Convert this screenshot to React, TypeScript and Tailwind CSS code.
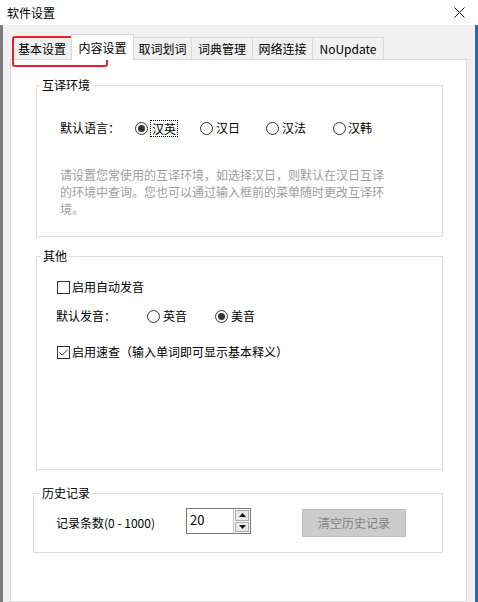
import type { ReactNode } from 'react';

const Radio = ({ checked }: { checked?: boolean }) => (
  <span className="flex h-[13px] w-[13px] shrink-0 items-center justify-center rounded-full border border-[#333333] bg-white">
    {checked && <span className="h-[7px] w-[7px] rounded-full bg-[#333333]" />}
  </span>
);

const Checkbox = ({ checked }: { checked?: boolean }) => (
  <span className="flex h-[13px] w-[13px] shrink-0 items-center justify-center border border-[#333333] bg-white">
    {checked && (
      <svg width="11" height="11" viewBox="0 0 11 11">
        <path d="M1.5 5.5 L4.2 8.2 L9.6 2.6" stroke="#333333" strokeWidth="1" fill="none" />
      </svg>
    )}
  </span>
);

const Group = ({
  title,
  className,
  legendClass,
  children,
}: {
  title: string;
  className: string;
  legendClass: string;
  children: ReactNode;
}) => (
  <fieldset className={`border border-[#dcdcdc] ${className}`}>
    <legend className={`px-[2px] text-[12px] leading-[16px] text-black ${legendClass}`}>{title}</legend>
    {children}
  </fieldset>
);

const tabs = [
  { label: '基本设置', w: 'w-[60px]' },
  { label: '内容设置', w: 'w-[63px]', active: true },
  { label: '取词划词', w: 'w-[59px]' },
  { label: '词典管理', w: 'w-[62px]' },
  { label: '网络连接', w: 'w-[61px]' },
  { label: 'NoUpdate', w: 'w-[72px]' },
];

export default function App() {
  return (
    <div className="relative h-[602px] w-[478px] overflow-hidden bg-[#f0f0f0] font-['Noto_Sans_CJK_SC','Noto_Sans',sans-serif] text-[12px] text-black">
      {/* Title bar */}
      <div className="flex h-[25px] items-center justify-between bg-white pl-[7px] pr-[13px]">
        <span className="leading-[16px]">软件设置</span>
        <svg width="11" height="11" viewBox="0 0 11 11">
          <path d="M0.5 0.5 L10.5 10.5 M10.5 0.5 L0.5 10.5" stroke="#111111" strokeWidth="1" />
        </svg>
      </div>

      <div className="flex h-[577px]">
        <div className="w-[3px] bg-[#7d7d7d]" />

        <div className="flex-1 pl-[7px] pt-[9px]">
          {/* Tabs */}
          <div className="flex h-[25px] items-end pl-[2px]">
            {tabs.map((t, i) =>
              t.active ? (
                <div
                  key={t.label}
                  className={`relative z-10 -mb-px flex h-[26px] items-center justify-center border border-b-0 border-[#d9d9d9] bg-white leading-[16px] ${t.w} ${i > 0 ? '-ml-px' : ''}`}
                >
                  {t.label}
                </div>
              ) : (
                <div
                  key={t.label}
                  className={`flex h-[22px] items-center justify-center border border-b-0 border-[#d9d9d9] bg-[#f0f0f0] pt-[1px] leading-[16px] ${t.w} ${i > 0 ? '-ml-px' : ''}`}
                >
                  {t.label}
                </div>
              )
            )}
          </div>

          {/* Tab panel */}
          <div className="h-[543px] w-[457px] border border-[#d9d9d9] bg-white pt-[17px]">
            <Group title="互译环境" className="ml-[25px] w-[407px] pb-[19px]" legendClass="ml-[3px]">
              <div className="mt-[26px] flex h-[18px] items-center pl-[23px]">
                <span className="w-[75px] leading-[16px]">默认语言：</span>
                <div className="flex w-[65px] items-center">
                  <Radio checked />
                  <span className="ml-[2px] border border-dotted border-black pl-[1px] pr-[1px] leading-[15px]">汉英</span>
                </div>
                <div className="flex w-[66px] items-center">
                  <Radio />
                  <span className="ml-[3px] leading-[16px]">汉日</span>
                </div>
                <div className="flex w-[67px] items-center">
                  <Radio />
                  <span className="ml-[3px] leading-[16px]">汉法</span>
                </div>
                <div className="flex items-center">
                  <Radio />
                  <span className="ml-[2px] leading-[16px]">汉韩</span>
                </div>
              </div>
              <p className="mt-[29px] pl-[23px] leading-[17px] text-[#9d9d9d]">
                请设置您常使用的互译环境，如选择汉日，则默认在汉日互译
                <br />
                的环境中查询。您也可以通过输入框前的菜单随时更改互译环
                <br />
                境。
              </p>
            </Group>

            <Group title="其他" className="ml-[25px] mt-[11px] w-[407px] pb-[108px]" legendClass="ml-[4px]">
              <div className="mt-[14px] flex h-[18px] items-center pl-[20px]">
                <Checkbox />
                <span className="ml-[2px] leading-[16px]">启用自动发音</span>
              </div>
              <div className="mt-[11px] flex h-[18px] items-center pl-[19px]">
                <span className="w-[91px] leading-[16px]">默认发音：</span>
                <div className="flex w-[68px] items-center">
                  <Radio />
                  <span className="ml-[3px] leading-[16px]">英音</span>
                </div>
                <div className="flex items-center">
                  <Radio checked />
                  <span className="ml-[3px] leading-[16px]">美音</span>
                </div>
              </div>
              <div className="mt-[18px] flex h-[18px] items-center pl-[20px]">
                <Checkbox checked />
                <span className="ml-[2px] leading-[16px]">启用速查（输入单词即可显示基本释义）</span>
              </div>
            </Group>

            <Group title="历史记录" className="ml-[22px] mt-[15px] w-[410px] pb-[14px]" legendClass="ml-[6px]">
              <div className="mt-[7px] flex items-start pl-[22px]">
                <span className="w-[130px] leading-[30px]">记录条数(0 - 1000)</span>
                <div className="flex h-[26px] w-[65px] border border-[#7a7a7a] bg-white">
                  <div className="flex-1 pl-[3px] text-[13px] leading-[22px]">20</div>
                  <div className="flex w-[17px] flex-col gap-[1px] border-l border-[#c4c4c4] bg-[#f4f4f4] p-[1px]">
                    <div className="flex flex-1 items-center justify-center border border-[#adadad] bg-[#e8e8e8]">
                      <svg width="7" height="4" viewBox="0 0 7 4">
                        <path d="M3.5 0 L7 4 L0 4 Z" fill="#111111" />
                      </svg>
                    </div>
                    <div className="flex flex-1 items-center justify-center border border-[#adadad] bg-[#e8e8e8]">
                      <svg width="7" height="4" viewBox="0 0 7 4">
                        <path d="M0 0 L7 0 L3.5 4 Z" fill="#111111" />
                      </svg>
                    </div>
                  </div>
                </div>
                <button className="ml-[51px] mt-[1px] h-[28px] w-[104px] border border-[#bfbfbf] bg-[#cccccc] leading-[16px] text-[#838383]">
                  清空历史记录
                </button>
              </div>
            </Group>
          </div>
        </div>

        <div className="w-[1px] bg-[#5f5f5f]" />
        <div className="w-[2px] bg-[#1c6dc0]" />
      </div>

      {/* Red annotation box */}
      <div className="pointer-events-none absolute left-[12px] top-[36px] h-[31px] w-[96px] rounded-[3px] border-2 border-[#e8202a]" />
    </div>
  );
}
